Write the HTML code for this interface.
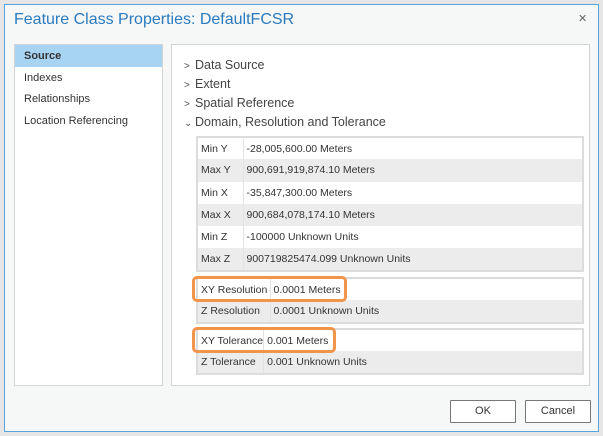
<!DOCTYPE html>
<html><head><style>
*{box-sizing:border-box;margin:0;padding:0}
body{width:603px;height:436px;background:#e6e6e6;font-family:"Liberation Sans",sans-serif;position:relative;overflow:hidden}
.dlg{position:absolute;left:4px;top:4px;width:595px;height:428px;background:#f6f7f7;border:1px solid #5aa3dc}
.abs{position:absolute}
.title{left:14px;top:11px;font-size:16px;color:#2a7bbf;white-space:nowrap}
.close{left:578px;top:12px;font-size:11px;color:#666}
.left{left:14px;top:44px;width:149px;height:342px;background:#fff;border:1px solid #d4d4d4}
.left div{height:21.5px;line-height:22px;padding-left:9px;font-size:11px;color:#333}
.left .sel{background:#a8d4f4;font-weight:bold}
.right{left:171px;top:44px;width:419px;height:342px;background:#fff;border:1px solid #d4d4d4}
.hd{position:absolute;left:12px;font-size:12.5px;color:#444;white-space:nowrap}
.hd span{display:inline-block;width:11px;font-size:10px;color:#555}
table{position:absolute;border-collapse:collapse;font-size:10.5px;color:#333;border:2px solid #dcdcdc}
td{height:22.3px;padding-left:3px;border-right:1px solid #e3e3e3;white-space:nowrap}
tr.g{background:#ececec}
.ob{position:absolute;border:3px solid #f0954a;border-radius:5px}
.btn{position:absolute;top:400px;width:66px;height:23px;border:1px solid #777;background:#fff;font-size:11px;text-align:center;line-height:21px;color:#333;border-radius:1px}
</style></head><body>
<div class="dlg"></div>
<div class="abs title">Feature Class Properties: DefaultFCSR</div>
<div class="abs close">✕</div>
<div class="abs left">
<div class="sel">Source</div><div>Indexes</div><div>Relationships</div><div>Location Referencing</div>
</div>
<div class="abs right">
<div class="hd" style="top:13px"><span>&gt;</span>Data Source</div>
<div class="hd" style="top:32px"><span>&gt;</span>Extent</div>
<div class="hd" style="top:51px"><span>&gt;</span>Spatial Reference</div>
<div class="hd" style="top:70px"><span>⌄</span>Domain, Resolution and Tolerance</div>
</div>
<table style="left:196px;top:136px;width:388px">
<tr><td style="width:46px">Min Y</td><td>-28,005,600.00 Meters</td></tr>
<tr class="g"><td>Max Y</td><td>900,691,919,874.10 Meters</td></tr>
<tr><td>Min X</td><td>-35,847,300.00 Meters</td></tr>
<tr class="g"><td>Max X</td><td>900,684,078,174.10 Meters</td></tr>
<tr><td>Min Z</td><td>-100000 Unknown Units</td></tr>
<tr class="g"><td>Max Z</td><td>900719825474.099 Unknown Units</td></tr>
</table>
<table style="left:196px;top:277px;width:388px">
<tr><td style="width:73px">XY Resolution</td><td>0.0001 Meters</td></tr>
<tr class="g"><td>Z Resolution</td><td>0.0001 Unknown Units</td></tr>
</table>
<table style="left:196px;top:328px;width:388px">
<tr><td style="width:66px">XY Tolerance</td><td>0.001 Meters</td></tr>
<tr class="g"><td>Z Tolerance</td><td>0.001 Unknown Units</td></tr>
</table>
<div class="ob" style="left:192px;top:276px;width:155px;height:26px"></div>
<div class="ob" style="left:192px;top:327px;width:144px;height:26px"></div>
<div class="btn" style="left:450px">OK</div>
<div class="btn" style="left:525px">Cancel</div>
</body></html>
